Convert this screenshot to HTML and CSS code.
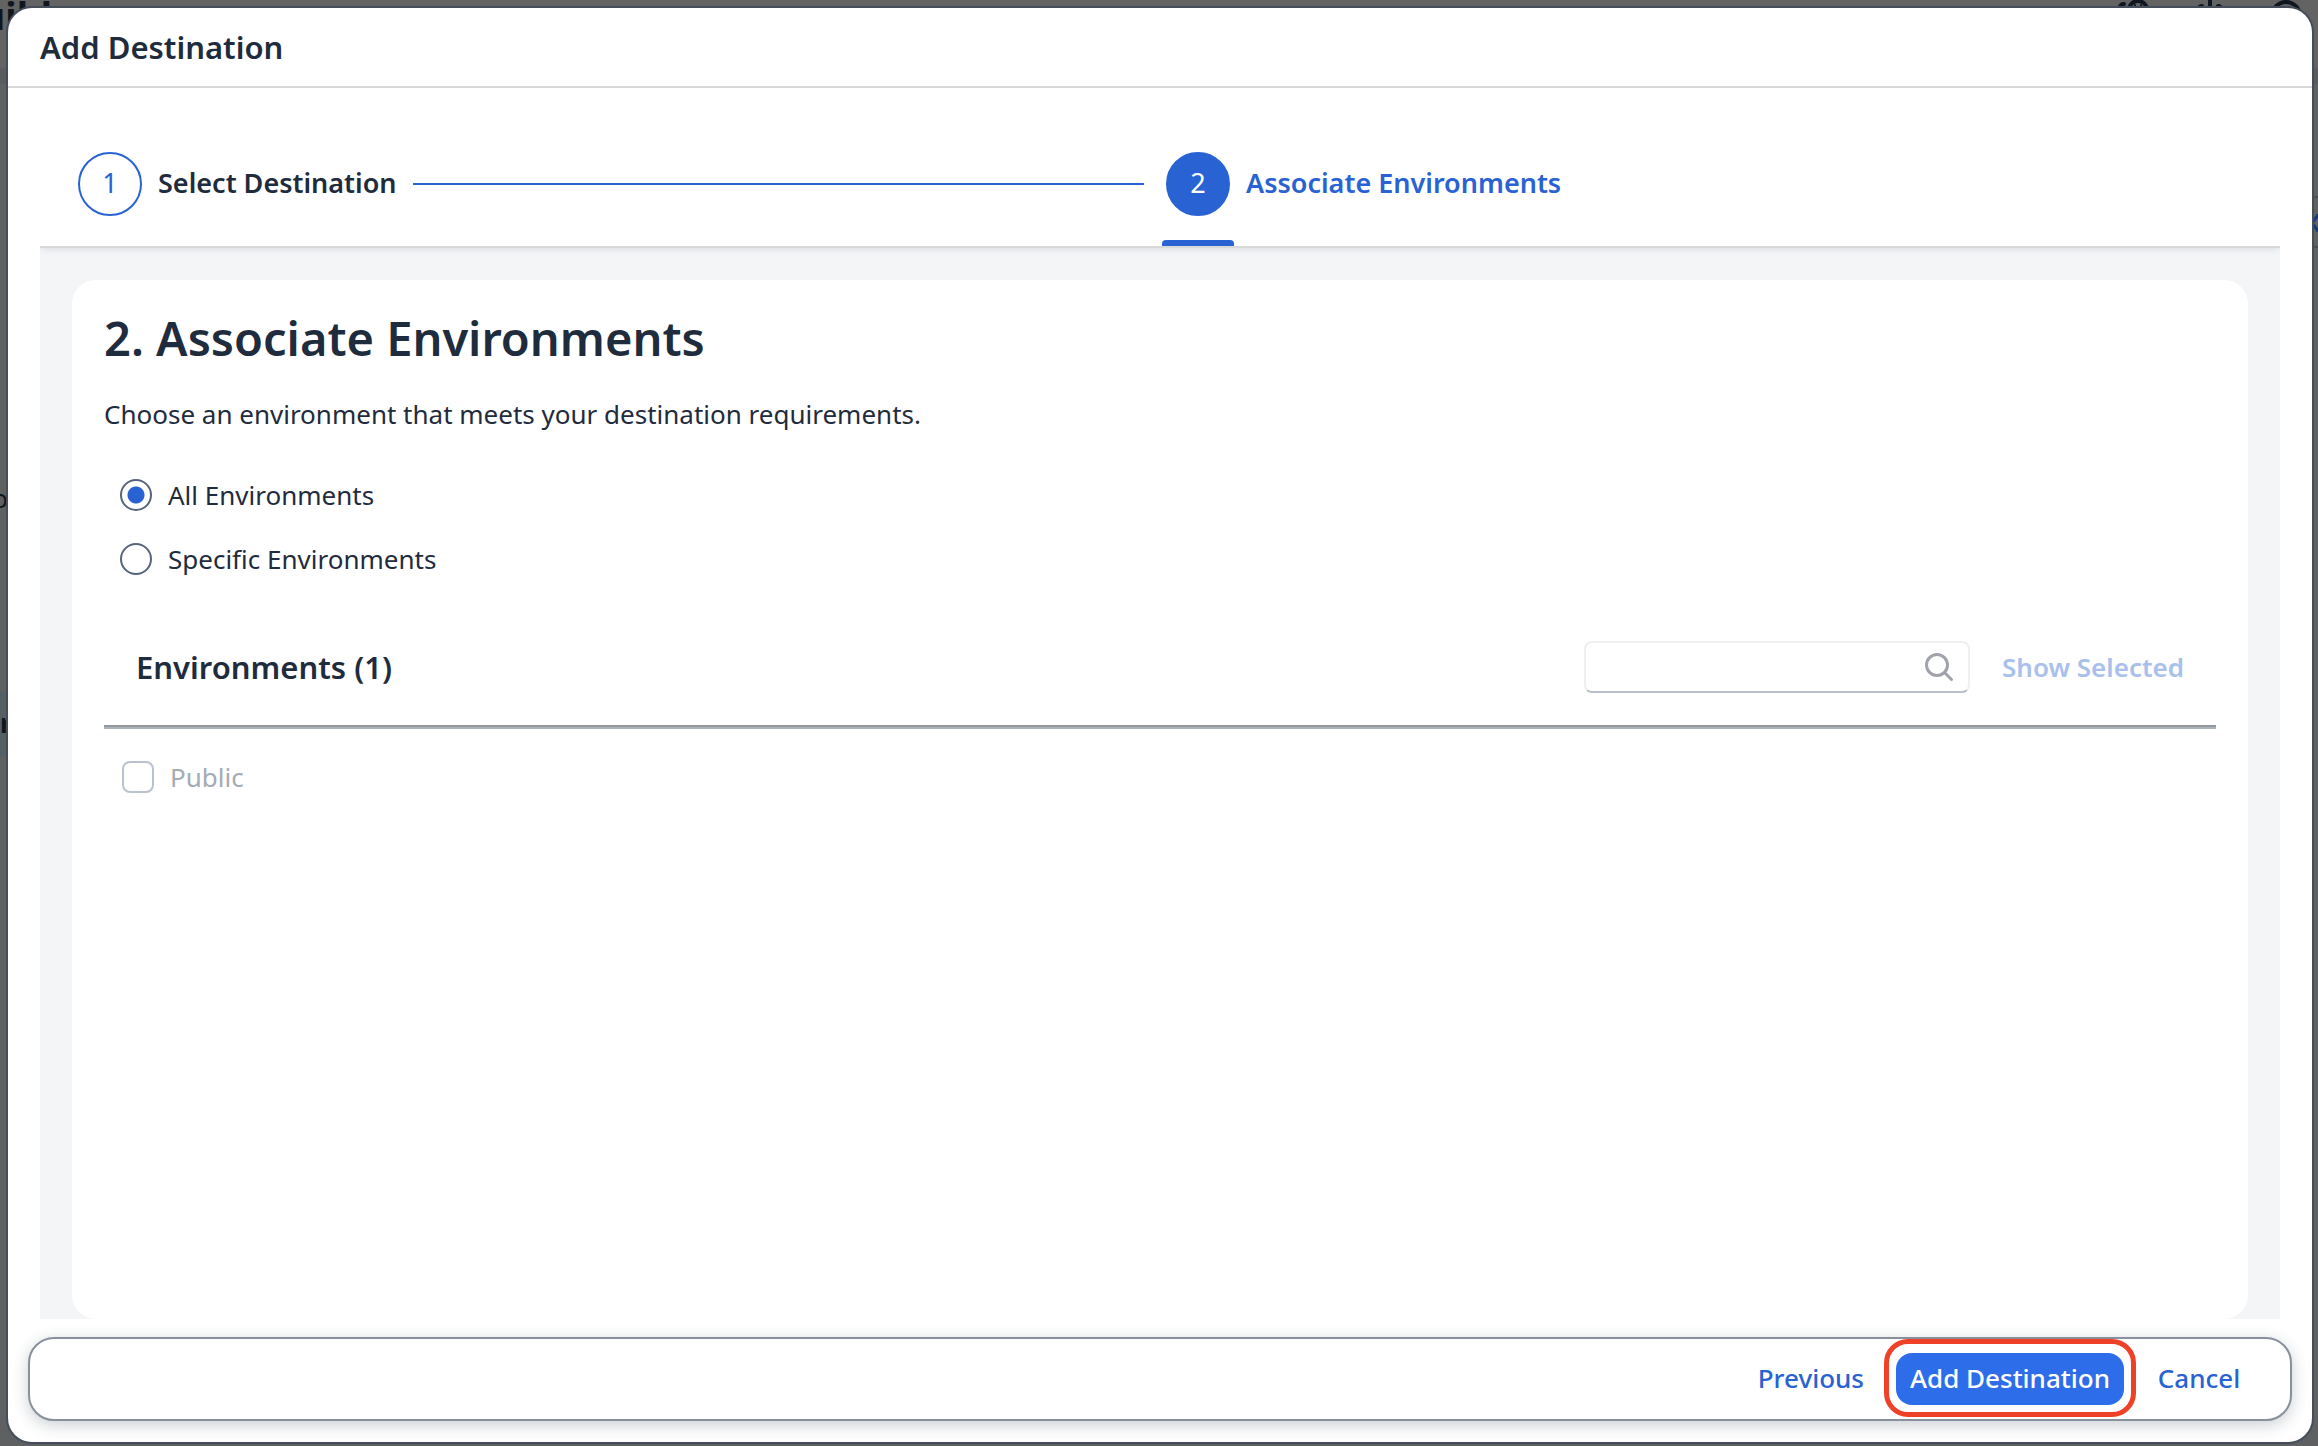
FILE: index.html
```
<!DOCTYPE html>
<html lang="en">
<head>
<meta charset="utf-8">
<meta name="viewport" content="width=device-width, initial-scale=1">
<title>Add Destination</title>
<link rel="stylesheet" href="styles.css">
</head>
<body>
<div class="app" aria-hidden="true">
  <div class="app-bar">
    <div class="app-title">Build</div>
    <div class="app-icons">
      <svg width="32" height="32" viewBox="0 0 32 32"><path d="M1.500 9Q2 4 6 4"/><circle cx="20" cy="10" r="9"/><path class="thin" d="M17 5v3M23 5v3"/></svg>
      <svg width="32" height="32" viewBox="0 0 32 32"><path d="M16 0v10M4 10Q5 6 8 6M28 10Q27 6 24 6"/></svg>
      <svg width="32" height="32" viewBox="0 0 32 32"><circle cx="16" cy="16" r="14"/><circle cx="16" cy="16" r="8"/></svg>
    </div>
  </div>
  <div class="app-strip"></div>
  <div class="app-main">
    <div class="side">
      <div class="side-label">o</div>
      <div class="side-item">r</div>
    </div>
    <div class="rail"><svg width="10" height="18" viewBox="0 0 10 18"><path d="M8 1L2 9L8 17"/></svg></div>
  </div>
</div>

<main class="dialog" role="dialog" aria-labelledby="dialog-title">
  <header class="dialog-header"><h1 class="dialog-title" id="dialog-title">Add Destination</h1></header>

  <div class="wizard">
    <ol class="steps">
      <li class="step">
        <span class="step-number">1</span>
        <span class="step-label">Select Destination</span>
        <span class="step-line"></span>
      </li>
      <li class="step step-current" aria-current="step">
        <span class="step-number">2</span>
        <span class="step-label">Associate Environments</span>
      </li>
    </ol>

    <div class="wizard-body">
      <section class="card">
        <h2 class="card-title">2. Associate Environments</h2>
        <p class="card-text">Choose an environment that meets your destination requirements.</p>

        <div class="options" role="radiogroup">
          <label class="option"><input class="radio" type="radio" name="scope" checked>All Environments</label>
          <label class="option"><input class="radio" type="radio" name="scope">Specific Environments</label>
        </div>

        <div class="toolbar">
          <h3 class="toolbar-title">Environments (1)</h3>
          <div class="search">
            <input class="search-input" type="text" aria-label="Search environments">
            <button class="search-button" type="button" aria-label="Search">
              <svg width="30" height="30" viewBox="0 0 30 30"><circle cx="13" cy="13" r="10.500"/><path d="M20.500 20.500L27.500 27.500"/></svg>
            </button>
          </div>
          <button class="show-selected" type="button" disabled>Show Selected</button>
        </div>

        <ul class="list">
          <li><label class="list-item"><input class="checkbox" type="checkbox" disabled>Public</label></li>
        </ul>
      </section>
    </div>
  </div>

  <footer class="dialog-footer">
    <button class="button" type="button">Previous</button>
    <button class="button button-primary" type="button">Add Destination</button>
    <button class="button button-cancel" type="button">Cancel</button>
  </footer>
</main>
</body>
</html>
```
FILE: styles.css
```
* {
  box-sizing: border-box;
}

body {
  margin: 0;
  min-height: 100vh;
  display: flex;
  background: #5f6062;
  color: #1f2c3d;
  font: 26px/40px "Noto Sans", "Open Sans", sans-serif;
}

h1, h2, h3, p, ol, ul {
  margin: 0;
  padding: 0;
}

ol, ul {
  list-style: none;
}

button, input {
  margin: 0;
  font: inherit;
}

/* Dimmed application behind the dialog */
.app {
  position: absolute;
  inset: 0;
  display: flex;
  flex-direction: column;
  overflow: hidden;
  color: #0f161f;
}

.app svg {
  fill: none;
  stroke: #0f161f;
  stroke-width: 4;
  stroke-linecap: round;
}

.app svg .thin {
  stroke-width: 2;
}

.app-bar {
  display: flex;
  justify-content: space-between;
  height: 68px;
  padding-right: 16px;
  background: #636363;
}

.app-title {
  display: flex;
  justify-content: flex-end;
  width: 52px;
  font-size: 38px;
  font-weight: 700;
  line-height: 30px;
}

.app-icons {
  display: flex;
  gap: 44px;
}

.app-strip {
  height: 16px;
  background: #595b5e;
}

.app-main {
  flex: 1;
  display: flex;
  justify-content: space-between;
}

.side {
  width: 8px;
  padding-top: 394px;
}

.side-label {
  display: flex;
  justify-content: flex-end;
  width: 8px;
  height: 214px;
}

.side-item {
  height: 64px;
  background: #555f66;
  font-weight: 700;
  line-height: 62px;
}

.rail {
  width: 8px;
  height: 52px;
  margin-top: 112px;
  padding: 16px 0;
  border-top: 2px solid #4c4d4f;
  border-bottom: 2px solid #4c4d4f;
}

.rail svg {
  display: block;
  stroke: #173a78;
  stroke-width: 3;
}

/* Dialog */
.dialog {
  position: relative;
  flex: 1;
  display: flex;
  flex-direction: column;
  margin: 8px 6px 4px 8px;
  border-radius: 24px;
  background: #fff;
  box-shadow: 0 0 0 2px #454d5b;
}

.dialog-header {
  display: flex;
  align-items: center;
  height: 80px;
  padding: 0 32px;
  border-bottom: 2px solid #d9d9d9;
}

.dialog-title, .toolbar-title {
  font-size: 31px;
  font-weight: 600;
}

.wizard {
  flex: 1;
  display: flex;
  flex-direction: column;
  margin: 32px 32px 0;
  overflow: hidden;
}

.steps {
  position: relative;
  display: grid;
  grid-template-columns: 1fr 1fr;
  padding: 0 32px;
  border-bottom: 2px solid #d9d9d9;
  background: #fff;
  box-shadow: 0 0 8px rgba(34, 53, 72, 0.16);
}

.step {
  display: flex;
  align-items: center;
  gap: 16px;
  padding: 32px 16px 30px 6px;
  font-size: 27px;
  font-weight: 600;
}

.step-label {
  padding-bottom: 2px;
}

.step-number {
  position: relative;
  width: 64px;
  height: 64px;
  border: 2px solid #2962d2;
  border-radius: 50%;
  color: #2962d2;
  font-size: 27px;
  font-weight: 400;
  line-height: 58px;
  text-align: center;
}

.step-line {
  flex: 1;
  height: 2px;
  background: #2962d2;
}

.step-current {
  color: #2962d2;
}

.step-current .step-number {
  background: #2962d2;
  color: #fff;
}

.step-current .step-number::after {
  content: "";
  position: absolute;
  left: -6px;
  right: -6px;
  bottom: -32px;
  height: 6px;
  border-radius: 4px 4px 0 0;
  background: #2962d2;
}

.wizard-body {
  flex: 1;
  display: flex;
  padding: 32px 32px 0;
  background: #f4f5f7;
}

.card {
  flex: 1;
  padding: 26px 32px;
  border-radius: 24px;
  background: #fff;
}

.card-title {
  font-size: 47px;
  font-weight: 600;
  line-height: 64px;
}

.card-text {
  margin-top: 24px;
}

.options {
  margin-top: 29px;
}

.option {
  display: flex;
  align-items: center;
  gap: 16px;
  height: 64px;
  padding-left: 16px;
}

.radio, .checkbox {
  appearance: none;
  width: 32px;
  height: 32px;
  border: 2px solid #56657a;
  background: #fff;
}

.radio {
  border-radius: 50%;
}

.radio:checked {
  background: radial-gradient(circle, #2962d2 8px, #fff 9px);
}

.toolbar {
  display: flex;
  align-items: center;
  margin-top: 38px;
  height: 76px;
  padding: 0 16px 0 32px;
}

.toolbar-title {
  flex: 1;
}

.search {
  display: flex;
  align-items: center;
  width: 386px;
  height: 52px;
  padding-right: 14px;
  border: 2px solid #efefef;
  border-bottom-color: #b9bfcb;
  border-radius: 8px;
}

.search-input {
  flex: 1;
  min-width: 0;
  height: 40px;
  padding: 0 12px;
  border: 0;
  background: none;
}

.search-button {
  padding: 0;
  border: 0;
  background: none;
}

.search-button svg {
  display: block;
  fill: none;
  stroke: #a0a4aa;
  stroke-width: 3;
  stroke-linecap: round;
}

.show-selected {
  margin-left: 16px;
  padding: 0 16px;
  border: 0;
  background: none;
  color: #a9c0ed;
  font-weight: 600;
}

.list {
  margin-top: 20px;
  border-top: 2px solid #969799;
  box-shadow: inset 0 2px #a9b3be;
}

.list-item {
  display: flex;
  align-items: center;
  gap: 16px;
  padding: 30px 18px;
  color: #a5abb3;
}

.checkbox {
  border-color: #bac1cf;
  border-radius: 8px;
}

.dialog-footer {
  position: relative;
  display: flex;
  align-items: center;
  justify-content: flex-end;
  gap: 16px;
  height: 84px;
  margin: 18px 20px 21px;
  padding: 0 32px;
  border: 2px solid #87909b;
  border-radius: 26px;
  background: #fff;
  box-shadow: 0 4px 16px rgba(34, 53, 72, 0.24);
}

.button {
  height: 52px;
  padding: 0 16px 2px;
  border: 0;
  border-radius: 16px;
  background: none;
  color: #2962d2;
  font-weight: 500;
}

.button-primary {
  position: relative;
  width: 228px;
  padding: 0 0 2px;
  background: #2d6dea;
  color: #fff;
}

.button-primary::after {
  content: "";
  position: absolute;
  inset: -14px -12px -12px;
  border: 5px solid #ee4127;
  border-radius: 24px;
}

.button-cancel {
  width: 118px;
}
```
